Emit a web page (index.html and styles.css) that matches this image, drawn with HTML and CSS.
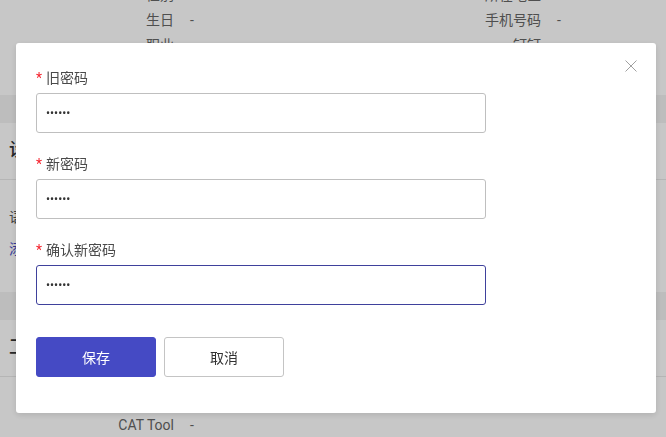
FILE: index.html
```html
<!DOCTYPE html>
<html lang="zh-CN">
<head>
<meta charset="utf-8">
<title>修改密码</title>
<link rel="stylesheet" href="styles.css">
</head>
<body>
<div class="page">
  <section class="card card-info">
    <div class="info-row"><span class="lbl">性别</span><span class="val">-</span><span class="lbl">所在地区</span><span class="val">-</span></div>
    <div class="info-row"><span class="lbl">生日</span><span class="val">-</span><span class="lbl">手机号码</span><span class="val">-</span></div>
    <div class="info-row"><span class="lbl">职业</span><span class="val">-</span><span class="lbl">钉钉</span><span class="val">-</span></div>
    <div class="info-row"><span class="lbl">邮箱</span><span class="val">-</span><span class="lbl">微信</span><span class="val">-</span></div>
  </section>
  <section class="card">
    <header class="card-head">设置</header>
    <div class="card-body">
      <p class="line">语言设置</p>
      <p class="line link">添加</p>
    </div>
  </section>
  <section class="card">
    <header class="card-head">工作信息</header>
    <div class="card-body card-body-tool">
      <div class="info-row"><span class="lbl">CAT Tool</span><span class="val">-</span></div>
    </div>
  </section>
</div>

<div class="mask">
  <div class="modal">
    <button class="close" aria-label="关闭">
      <svg width="12" height="12" viewBox="0 0 12 12"><path d="M0.5 0.5L11.5 11.5M11.5 0.5L0.5 11.5" stroke="#a0a0a0" stroke-width="1" fill="none"/></svg>
    </button>
    <form class="form">
      <div class="item">
        <label class="label"><span class="req">*</span>旧密码</label>
        <input class="input" type="password" value="123456">
      </div>
      <div class="item">
        <label class="label"><span class="req">*</span>新密码</label>
        <input class="input" type="password" value="123456">
      </div>
      <div class="item">
        <label class="label"><span class="req">*</span>确认新密码</label>
        <input class="input input-focus" type="password" value="123456">
      </div>
      <div class="actions">
        <button type="button" class="btn btn-primary">保存</button>
        <button type="button" class="btn">取消</button>
      </div>
    </form>
  </div>
</div>
</body>
</html>
```

FILE: styles.css
```css
* { box-sizing: border-box; }
html, body {
  margin: 0;
  padding: 0;
  height: 100%;
  overflow: hidden;
}
body {
  background: #f2f2f2;
  font-family: Roboto, "Noto Sans CJK SC", sans-serif;
  font-size: 14px;
  color: #666;
}
.page {
  display: flex;
  flex-direction: column;
}
.card {
  background: #fff;
  margin-bottom: 28px;
}
.card-info {
  height: 95px;
  display: flex;
  flex-direction: column;
  justify-content: flex-end;
  overflow: hidden;
  padding-bottom: 12px;
}
.info-row {
  display: grid;
  grid-template-columns: 174px 193px 174px 1fr;
  line-height: 25px;
  height: 25px;
}
.lbl { text-align: right; color: #666; }
.val { padding-left: 16px; color: #666; }
.card-head {
  height: 57px;
  line-height: 54px;
  border-bottom: 1px solid #e8e8e8;
  padding-left: 9px;
  font-size: 18px;
  font-weight: 500;
  color: #333;
}
.card-body {
  padding: 26px 9px 20px;
  height: 112px;
}
.line {
  margin: 0 0 10px;
  line-height: 22px;
  color: #555;
}
.link { color: #454ac4; }
.card-body-tool {
  padding: 36px 0 0;
  height: 100px;
}

.mask {
  position: fixed;
  inset: 0;
  background: rgba(0, 0, 0, 0.22);
}
.modal {
  position: absolute;
  left: 16px;
  top: 43px;
  width: 640px;
  background: #fff;
  border-radius: 3px;
  box-shadow: 0 2px 6px rgba(0, 0, 0, 0.12);
  padding: 23px 20px 36px;
  font-family: "Noto Sans CJK SC", Roboto, sans-serif;
}
.close {
  position: absolute;
  top: 17px;
  right: 19px;
  width: 12px;
  height: 12px;
  padding: 0;
  border: 0;
  background: none;
  display: flex;
}
.form {
  display: flex;
  flex-direction: column;
}
.item {
  display: flex;
  flex-direction: column;
  margin-bottom: 19px;
}
.label {
  line-height: 22px;
  height: 22px;
  margin-bottom: 5px;
  color: #4a4a4a;
  font-size: 14px;
}
.req {
  color: #f5222d;
  margin-right: 4px;
  font-family: Roboto, sans-serif;
}
.input {
  width: 450px;
  height: 40px;
  border: 1px solid #bfbfbf;
  border-radius: 3px;
  padding: 0 9px;
  font-size: 12px;
  color: #333;
  outline: none;
  font-family: Roboto, sans-serif;
}
.input-focus {
  border-color: #3f419c;
}
.actions {
  display: flex;
  gap: 8px;
  margin-top: 13px;
}
.btn {
  width: 120px;
  height: 40px;
  border: 1px solid #c4c4c4;
  border-radius: 3px;
  background: #fff;
  color: #333;
  font-size: 14px;
  font-family: "Noto Sans CJK SC", sans-serif;
  padding: 0;
}
.btn-primary {
  background: #454ac4;
  border-color: #454ac4;
  color: #fff;
}
```
